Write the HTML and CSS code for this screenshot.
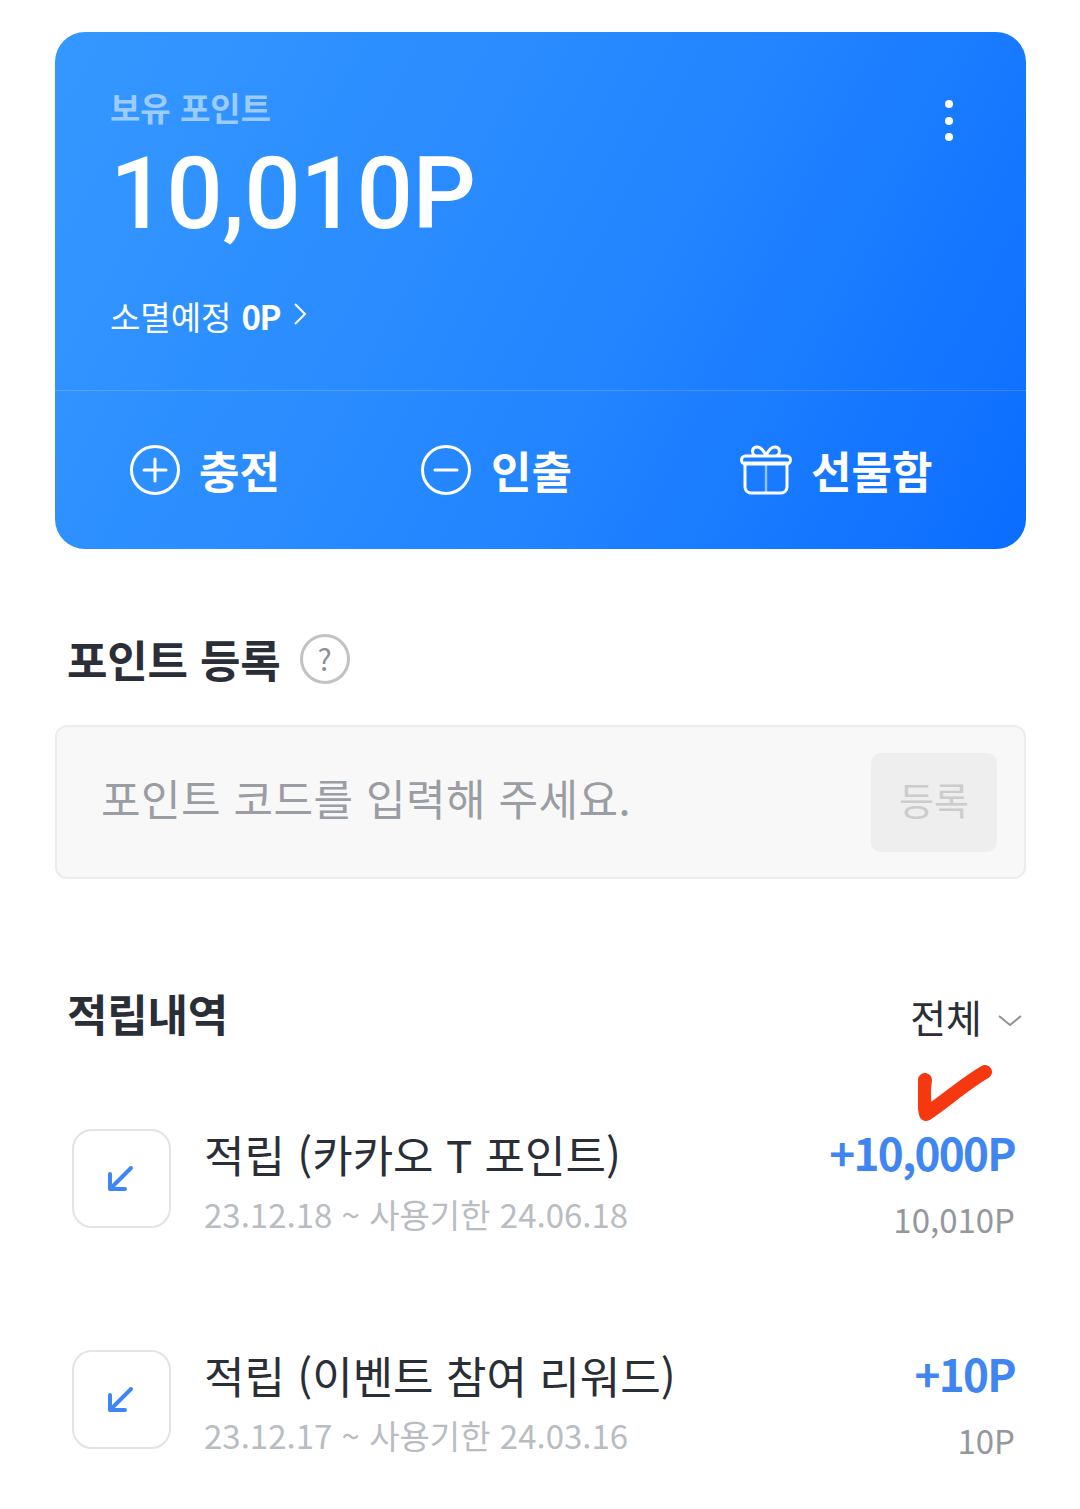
FILE: index.html
```html
<!DOCTYPE html>
<html lang="ko">
<head>
    <meta charset="UTF-8">
    <meta name="viewport" content="width=device-width, initial-scale=1.0">
    <title>포인트</title>
    <link rel="stylesheet" href="styles.css">
</head>
<body>
    <div class="page">
        <!-- Point balance card -->
        <section class="card">
            <div class="card-top">
                <div class="card-label">보유 포인트</div>
                <div class="card-amount">10,010P</div>
                <div class="card-expire">
                    <span>소멸예정</span> <b>0P</b>
                    <svg class="expire-arrow" width="14" height="24" viewBox="0 0 14 24"><path d="M2 2l10 10L2 22" fill="none" stroke="#fff" stroke-width="2"/></svg>
                </div>
                <svg class="card-more" width="8" height="44" viewBox="0 0 8 44"><circle cx="4" cy="5" r="4" fill="#fff"/><circle cx="4" cy="22" r="4" fill="#fff"/><circle cx="4" cy="38" r="4" fill="#fff"/></svg>
            </div>
            <div class="card-actions">
                <div class="action action-charge">
                    <svg width="50" height="50" viewBox="0 0 50 50"><circle cx="25" cy="25" r="23.5" fill="none" stroke="#fff" stroke-width="3"/><path d="M25 14v22M14 25h22" fill="none" stroke="#fff" stroke-width="3" stroke-linecap="round"/></svg>
                    <span>충전</span>
                </div>
                <div class="action action-withdraw">
                    <svg width="50" height="50" viewBox="0 0 50 50"><circle cx="25" cy="25" r="23.5" fill="none" stroke="#fff" stroke-width="3"/><path d="M14 25h22" fill="none" stroke="#fff" stroke-width="3" stroke-linecap="round"/></svg>
                    <span>인출</span>
                </div>
                <div class="action action-gift">
                    <svg width="52" height="50" viewBox="0 0 52 50"><path d="M5 18h42v24a6 6 0 0 1-6 6H11a6 6 0 0 1-6-6z" fill="none" stroke="#fff" stroke-width="3"/><rect x="1.5" y="11" width="49" height="8" rx="4" fill="none" stroke="#fff" stroke-width="3"/><path d="M26 11c-2-5-5-9-9-9-5 0-6 6-2 9M26 11c2-5 5-9 9-9 5 0 6 6 2 9" fill="none" stroke="#fff" stroke-width="3"/><path d="M26 19v29" stroke="#fff" stroke-opacity=".55" stroke-width="2.4"/></svg>
                    <span>선물함</span>
                </div>
            </div>
        </section>

        <!-- Register point code -->
        <div class="register-head">
            <h2>포인트 등록</h2>
            <div class="help">?</div>
        </div>
        <div class="register-box">
            <span class="placeholder">포인트 코드를 입력해 주세요.</span>
            <div class="register-btn">등록</div>
        </div>

        <!-- History -->
        <div class="history-head">
            <h2>적립내역</h2>
            <div class="filter">
                <span>전체</span>
                <svg width="24" height="12" viewBox="0 0 24 12"><path d="M1 1l11 9 11-9" fill="none" stroke="#8f9298" stroke-width="2"/></svg>
            </div>
        </div>

        <div class="row row-first">
            <div class="row-icon">
                <svg width="28" height="28" viewBox="0 0 28 28"><path d="M25 3L4 24M4 9v15h15" fill="none" stroke="#3f86f0" stroke-width="4" stroke-linecap="round" stroke-linejoin="round"/></svg>
            </div>
            <div class="row-main">
                <div class="row-title">적립 (카카오 T 포인트)</div>
                <div class="row-date">23.12.18 ~ 사용기한 24.06.18</div>
            </div>
            <div class="row-right">
                <svg class="check" width="76" height="58" viewBox="0 0 76 58"><path d="M7 16C5 30 6 40 8 50 24 40 46 20 67 8" fill="none" stroke="#f5380f" stroke-width="14" stroke-linecap="round" stroke-linejoin="round"/></svg>
                <div class="row-amount">+10,000P</div>
                <div class="row-balance">10,010P</div>
            </div>
        </div>

        <div class="row">
            <div class="row-icon">
                <svg width="28" height="28" viewBox="0 0 28 28"><path d="M25 3L4 24M4 9v15h15" fill="none" stroke="#3f86f0" stroke-width="4" stroke-linecap="round" stroke-linejoin="round"/></svg>
            </div>
            <div class="row-main">
                <div class="row-title">적립 (이벤트 참여 리워드)</div>
                <div class="row-date">23.12.17 ~ 사용기한 24.03.16</div>
            </div>
            <div class="row-right">
                <div class="row-amount">+10P</div>
                <div class="row-balance">10P</div>
            </div>
        </div>
    </div>
</body>
</html>
```

FILE: styles.css
```css
* {
    box-sizing: border-box;
}
html, body {
    margin: 0;
    height: 100%;
    overflow: hidden;
}
body {
    font-family: "Noto Sans CJK KR", "Noto Sans", sans-serif;
    background-color: #fff;
    color: #2a2e36;
}
.page {
    padding: 32px 54px 0 55px;
}
h2 {
    margin: 0;
    font-size: 44px;
    line-height: 56px;
    font-weight: 700;
    letter-spacing: -0.2px;
}

.card {
    height: 517px;
    border-radius: 30px;
    background: linear-gradient(118deg, #3598ff 0%, #2486ff 55%, #0b6dff 100%);
    color: #fff;
}
.card-top {
    position: relative;
    height: 359px;
    padding: 53px 0 0 55px;
    border-bottom: 1px solid rgba(255, 255, 255, 0.18);
}
.card-label {
    font-size: 33px;
    line-height: 44px;
    font-weight: 700;
    color: #9ccbff;
}
.card-amount {
    margin-top: 18px;
    font-family: Roboto, sans-serif;
    font-size: 99.5px;
    line-height: 94px;
    font-weight: 500;
    letter-spacing: -0.4px;
}
.card-expire {
    display: flex;
    align-items: center;
    gap: 10px;
    margin-top: 53px;
    font-size: 33px;
    line-height: 44px;
}
.card-expire b {
    font-weight: 700;
    letter-spacing: -1.4px;
}
.expire-arrow {
    margin-left: 3px;
    margin-top: -4px;
}
.card-more {
    position: absolute;
    top: 67px;
    right: 73px;
}
.card-actions {
    display: flex;
    align-items: center;
    height: 157px;
    padding-left: 75px;
}
.action {
    display: flex;
    align-items: center;
    gap: 20px;
    font-size: 44px;
    font-weight: 700;
    line-height: 50px;
}
.action-charge span {
    margin-left: -1px;
}
.action-withdraw {
    margin-left: 141px;
}
.action-gift {
    margin-left: 168px;
    gap: 19px;
}

.register-head {
    display: flex;
    align-items: center;
    gap: 19px;
    margin-top: 82px;
    padding-left: 12px;
}
.help {
    width: 50px;
    height: 50px;
    border: 3px solid #c2c2c2;
    border-radius: 50%;
    color: #8d9096;
    font-size: 30px;
    line-height: 42px;
    text-align: center;
}
.register-box {
    display: flex;
    align-items: center;
    justify-content: space-between;
    height: 154px;
    margin-top: 38px;
    padding: 0 27px 0 44px;
    background-color: #f8f8f8;
    border: 2px solid #ececec;
    border-radius: 12px;
}
.placeholder {
    margin-top: -10px;
    font-size: 43px;
    color: #9a9da3;
    letter-spacing: 0.45px;
}
.register-btn {
    width: 126px;
    height: 99px;
    border-radius: 10px;
    background-color: #eeeeee;
    color: #cccccc;
    font-size: 38px;
    line-height: 92px;
    text-align: center;
}

.history-head {
    display: flex;
    align-items: center;
    justify-content: space-between;
    margin-top: 106px;
    padding: 0 4px 0 12px;
}
.filter {
    display: flex;
    align-items: center;
    gap: 16px;
    font-size: 39px;
    line-height: 50px;
    padding-top: 6px;
}
.filter svg {
    margin-top: 10px;
}
.row {
    display: flex;
    align-items: flex-start;
    padding: 0 11px 0 17px;
    margin-top: 106px;
}
.row-first {
    margin-top: 88px;
}
.row-icon {
    display: flex;
    align-items: center;
    justify-content: center;
    flex: none;
    width: 99px;
    height: 99px;
    border: 2px solid #e4e4e4;
    border-radius: 20px;
}
.row-icon svg {
    margin-right: 3px;
}
.row-main {
    flex: 1;
    margin-left: 33px;
}
.row-title {
    margin-top: -6px;
    font-size: 44px;
    line-height: 62px;
}
.row-date {
    margin-top: 4px;
    font-size: 33px;
    line-height: 50px;
    color: #b9bcc1;
}
.row-right {
    position: relative;
    text-align: right;
}
.check {
    position: absolute;
    top: -65px;
    right: 21px;
}
.row-amount {
    margin-top: -8px;
    font-size: 44px;
    line-height: 62px;
    font-weight: 700;
    color: #3f86f0;
    letter-spacing: -1.7px;
}
.row-balance {
    margin-top: 11px;
    font-size: 33px;
    line-height: 50px;
    color: #94979d;
}
```
